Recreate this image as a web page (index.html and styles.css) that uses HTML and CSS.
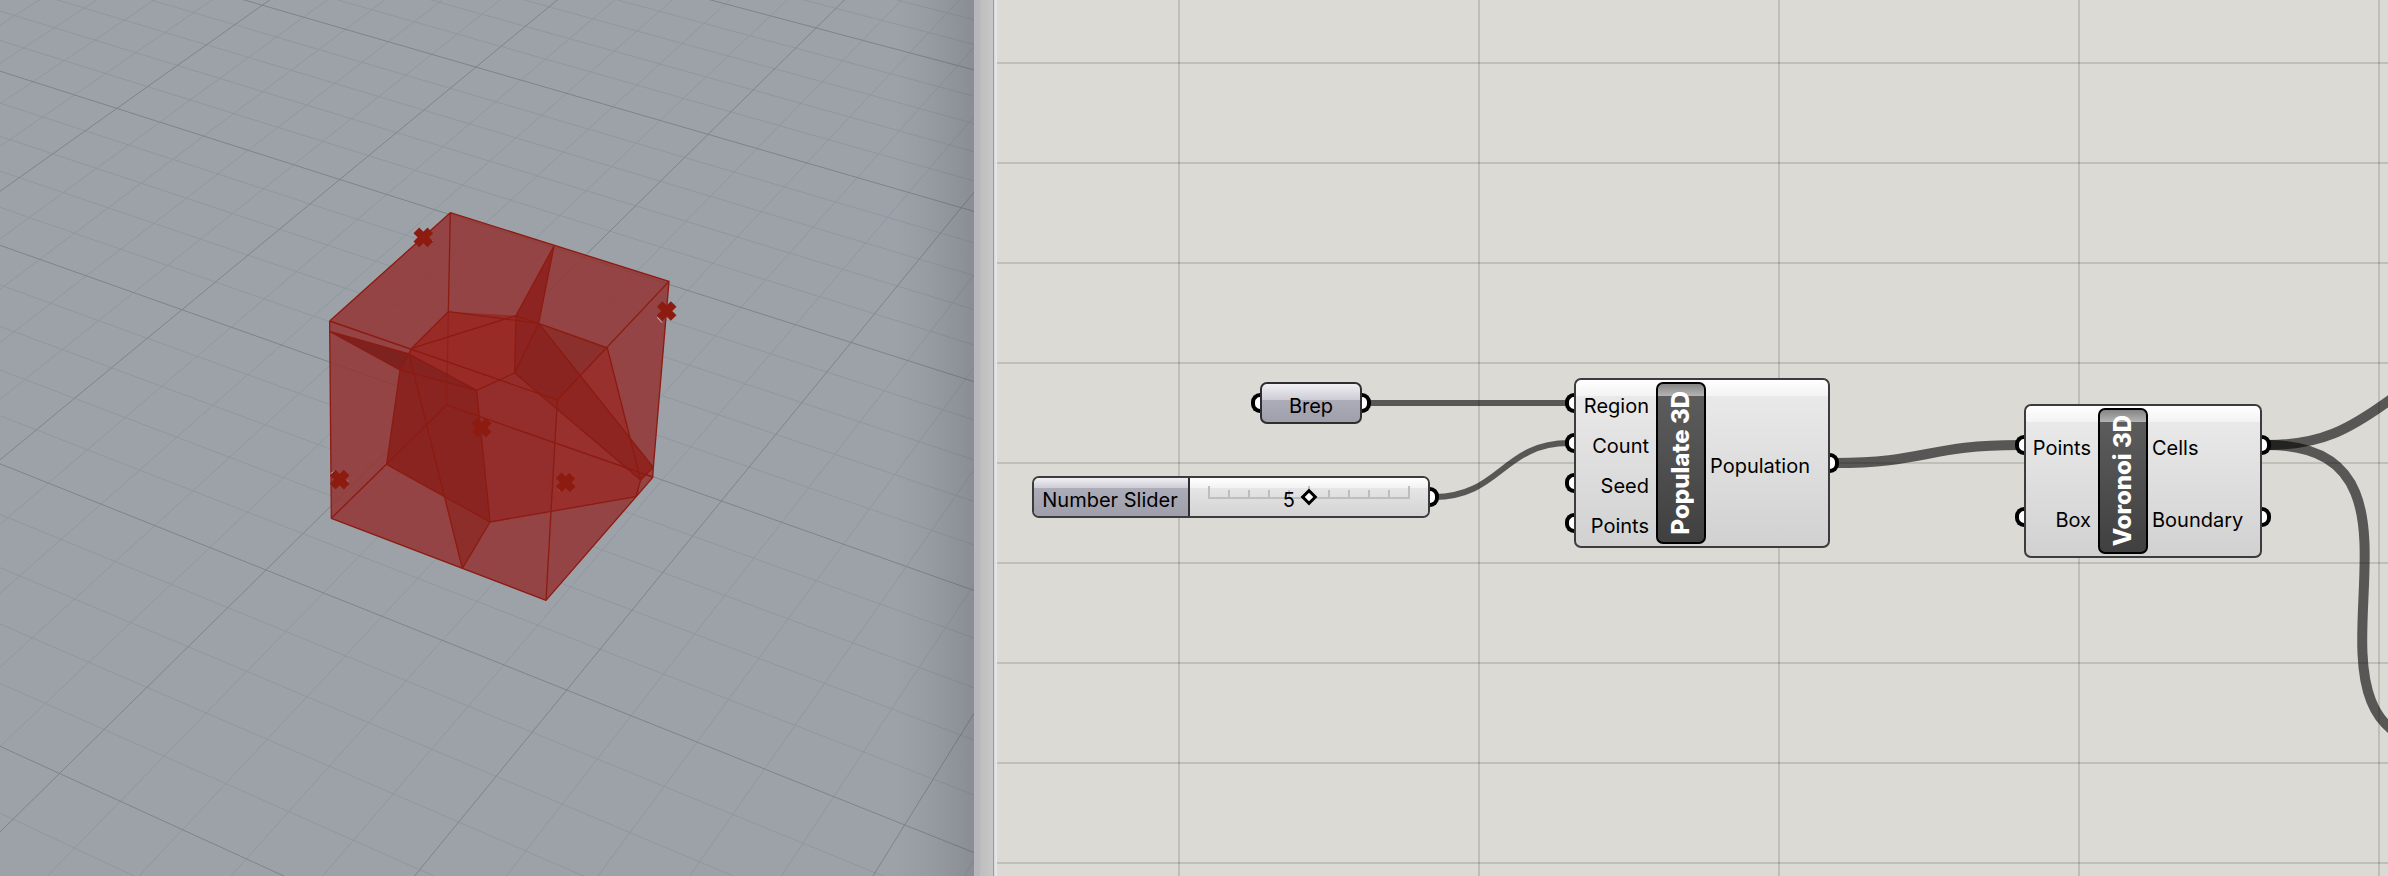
FILE: index.html
```html
<!DOCTYPE html>
<html lang="en">
<head>
<meta charset="utf-8">
<title>Voronoi 3D definition</title>
<link rel="stylesheet" href="styles.css">
</head>
<body>
<main class="workspace">
  <section class="viewport" aria-label="Perspective viewport">
    <svg class="scene" role="img" aria-label="Voronoi cells inside a box">
      <g class="ground" id="ground"></g>
      <g transform="translate(300 190) scale(0.33333)">
        <path class="box" d="M451 68L1107 274 1060 832 1058 863 738 1231 94 985 89 393z"/>
        <path fill="#942e2c" d="M445 365L716 400 922 474 1022 870 1008 920 570 996 260 823 300 540 335 475z"/>
        <path fill="#98302d" d="M772 630L840 555 922 474 1022 870 1008 920 754 964z"/>
        <path fill="#992b27" d="M445 365L648 377 644 549 530 601 327 492 335 475z"/>
        <path fill="#8b302c" d="M716 400L922 474 840 555z"/>
        <path fill="#8f2520" d="M716 400L1060 832 1022 870 644 549z"/>
        <path fill="#892420" d="M716 400L840 555 772 630 712 607 644 549z"/>
        <path fill="#8d2421" d="M762 168L716 400 644 549 648 377z"/>
        <path fill="#7e221f" d="M89 424L327 492 300 540z"/>
        <path fill="#8a2420" d="M327 492L530 601 570 996 260 823 300 540z"/>
        <path fill="#84231f" d="M327 492L530 601 300 540z"/>
        <path fill="#8e2e2b" d="M432 915L570 996 487 1135z"/>
        <path class="edge faint" d="M445 365L440 645"/>
        <path class="edge" d="M89 393L451 68 1107 274 772 630 738 1231M89 393L772 630M89 393L94 985 738 1231 1058 863 1060 832 1107 274M451 68L445 365M94 985L440 645 1058 861"/>
        <path class="edge" d="M762 168L648 377M762 168L716 400M445 365L716 400M445 365L335 475 300 540M335 475L648 377 716 400 922 474 1022 870 1008 920 570 996 487 1135 327 492M335 475L327 492M570 996L260 823 300 540 530 601M89 424L327 492 530 601M89 424L300 540M530 601L644 549 648 377M530 601L570 996M644 549L716 400 1060 832 1022 870z"/>
        <path class="glint" d="M382 168L397 152M1072 382L1086 398M92 851L106 842 119 854M130 886L143 872M770 890L783 904M810 850L824 864"/>
        <path class="cross" d="M349 121L391 163M391 121L349 163M1079 342L1121 384M1121 342L1079 384M524 692L566 734M566 692L524 734M98 848L140 890M140 848L98 890M776 856L818 898M818 856L776 898"/>
      </g>
    </svg>
  </section>

  <div class="splitter"></div>

  <section class="canvas" aria-label="Definition canvas">
    <svg class="wires" aria-hidden="true">
      <path d="M372 403H570"/>
      <path d="M437 497C503 497 506 443 572 443"/>
      <path class="thick" d="M838 463C928 463 932 445 1022 445"/>
      <path class="thick" d="M1270 445C1324 445 1352 430 1397 397"/>
      <path class="thick" d="M1270 445C1476 445 1258 748 1460 748"/>
    </svg>

    <div class="node brep">
      <span class="port in"></span>
      <span class="label">Brep</span>
      <span class="port out"></span>
    </div>

    <div class="node slider">
      <label class="slider-name" for="count"><span class="label">Number Slider</span></label>
      <div class="slider-body">
        <svg class="ticks" width="202" height="14" aria-hidden="true"><path d="M1 0V12H201V0M21 4V12M41 4V12M61 4V12M81 4V12M101 0V12M121 4V12M141 4V12M161 4V12M181 4V12"/></svg>
        <output class="slider-value label" for="count">5</output>
        <input class="slider-input" id="count" type="range" min="0" max="10" value="5">
      </div>
      <span class="port out"></span>
    </div>

    <div class="node component populate">
      <div class="side inputs">
        <div class="row"><span class="port in"></span><span class="label">Region</span></div>
        <div class="row"><span class="port in"></span><span class="label">Count</span></div>
        <div class="row"><span class="port in"></span><span class="label">Seed</span></div>
        <div class="row"><span class="port in"></span><span class="label">Points</span></div>
      </div>
      <div class="capsule"><span class="title">Populate 3D</span></div>
      <div class="side outputs">
        <div class="row"><span class="label">Population</span><span class="port out"></span></div>
      </div>
    </div>

    <div class="node component voronoi">
      <div class="side inputs">
        <div class="row"><span class="port in"></span><span class="label">Points</span></div>
        <div class="row"><span class="port in"></span><span class="label">Box</span></div>
      </div>
      <div class="capsule"><span class="title">Voronoi 3D</span></div>
      <div class="side outputs">
        <div class="row"><span class="label">Cells</span><span class="port out"></span></div>
        <div class="row"><span class="label">Boundary</span><span class="port out"></span></div>
      </div>
    </div>
  </section>
</main>
<script src="grid.js"></script>
</body>
</html>
```
FILE: styles.css
```css
* { box-sizing: border-box; }

body {
  margin: 0;
  font-family: Inter, "Liberation Sans", sans-serif;
  font-size: 20px;
  line-height: 24px;
  color: #000;
}

.workspace {
  display: grid;
  grid-template-columns: 974fr 23px 1391fr;
  min-height: 100vh;
}

/* 3D viewport */
.viewport {
  position: relative;
  overflow: hidden;
  background: #9da2a9;
}
.viewport::after {
  content: "";
  position: absolute;
  inset: 0 0 0 auto;
  width: 80px;
  background: linear-gradient(to right, rgba(60, 66, 60, 0), rgba(60, 66, 60, .06) 40%, rgba(60, 62, 64, .2));
}
.scene {
  position: absolute;
  inset: 0;
  width: 100%;
  height: 100%;
}
.ground line { stroke: #92979e; stroke-width: 1; }
.ground line.major { stroke: #7f8486; }
.box { fill: #922d2b; fill-opacity: .8; }
.edge { fill: none; stroke: #8d1b12; stroke-width: 4; stroke-linejoin: round; }
.edge.faint { stroke-opacity: .6; }
.cross { stroke: #8e1b10; stroke-width: 24; }
.glint { fill: none; stroke: #c9c4c4; stroke-width: 3; }

/* Window edge between the two panes */
.splitter {
  background: linear-gradient(to right,
    #b6b6bc 0, #b6b6bc 6px,
    #bebebe 6px, #c7c7c7 19px,
    #989a98 19px, #989a98 20px,
    #d9dadc 20px, #e9eaec 23px);
}

/* Node canvas */
.canvas {
  position: relative;
  overflow: hidden;
  background-color: #dcdad4;
  background-image:
    linear-gradient(to right, rgba(0, 0, 0, .13) 2px, transparent 2px),
    linear-gradient(to bottom, rgba(0, 0, 0, .13) 2px, transparent 2px);
  background-size: 300px 100px;
  background-position: 181px 62px;
}
.wires {
  position: absolute;
  inset: 0;
  width: 100%;
  height: 100%;
}
.wires path { fill: none; stroke: rgba(0, 0, 0, .6); stroke-width: 6; }
.wires .thick { stroke-width: 10; }

.node {
  position: absolute;
  display: flex;
  border: 2px solid #3c3c3e;
  border-radius: 7px;
}
.label { padding-top: 6px; white-space: nowrap; }

.port {
  position: absolute;
  top: calc(50% - 10px);
  width: 9px;
  height: 20px;
  border: 4px solid #000;
  background: #fff;
}
.port.in { left: -11px; border-right: 0; border-radius: 10px 0 0 10px; }
.port.out { right: -11px; border-left: 0; border-radius: 0 10px 10px 0; }

.brep {
  left: 263px;
  top: 382px;
  width: 102px;
  height: 42px;
  align-items: center;
  justify-content: center;
  background: linear-gradient(#f0eff4, #cdccd4 16px, #adacb9 16px, #9f9eab);
  border-color: #2e2e30;
}

.slider {
  left: 35px;
  top: 476px;
  width: 398px;
  height: 42px;
}
.slider-name {
  display: flex;
  align-items: center;
  justify-content: center;
  width: 156px;
  padding-right: 2px;
  border-right: 2px solid #2e2e30;
  border-radius: 5px 0 0 5px;
  background: linear-gradient(#f0eff4, #cdccd4 10px, #adacb9 10px, #9f9eab);
}
.slider-body {
  position: relative;
  display: flex;
  flex: 1;
  align-items: center;
  justify-content: center;
  border-radius: 0 5px 5px 0;
  background: linear-gradient(#fff, #f2f2f2 10px, #e6e6e6 10px, #d3d3d3);
}
.ticks { position: absolute; left: 18px; top: 8px; }
.ticks path { fill: none; stroke: #bebebe; stroke-width: 2; }
.slider-value {
  position: absolute;
  right: calc(50% + 14px);
}
.slider-input {
  position: relative;
  appearance: none;
  width: 210px;
  height: 14px;
  margin: 0;
  background: transparent;
}
.slider-input::-webkit-slider-thumb {
  appearance: none;
  width: 12px;
  height: 12px;
  border: 3px solid #000;
  background: #fff;
  transform: rotate(45deg);
}

.component { background: linear-gradient(#fff, #f3f3f3 16px, #e9e9e9 16px, #d1d1d1); }
.populate { left: 577px; top: 378px; width: 256px; height: 170px; }
.voronoi { left: 1027px; top: 404px; width: 238px; height: 154px; }
.side { display: flex; flex-direction: column; padding: 3px 0; }
.populate .inputs { width: 80px; }
.voronoi .inputs { width: 72px; }
.outputs { flex: 1; }
.row {
  position: relative;
  display: flex;
  flex: 1;
  align-items: center;
}
.inputs .row { justify-content: flex-end; padding-right: 7px; }
.outputs .row { padding-left: 4px; }

.capsule {
  display: flex;
  align-items: center;
  justify-content: center;
  width: 50px;
  margin: 2px 0;
  border: 2px solid #000;
  border-radius: 7px;
  background: linear-gradient(#858585, #b4b4b4 12px, #5c5c5c 12px, #404040);
}
.title {
  writing-mode: vertical-rl;
  transform: rotate(180deg);
  font-size: 24px;
  font-weight: 800;
  line-height: 28px;
  white-space: nowrap;
  color: #fff;
}
```
FILE: grid.js
```js
// Ground plane: three major squares per unit, five minor cells per square.
const ground = document.getElementById("ground");

function project(u, v) {
  const w = 1 - 0.11962 * u - 0.19769 * v;
  return [
    (584.01 * u - 459.43 * v + 262.3) / w,
    (177.66 * u + 288.2 * v + 5.2) / w
  ];
}

function addLine(from, to, major) {
  const line = document.createElementNS("http://www.w3.org/2000/svg", "line");
  line.setAttribute("x1", from[0]);
  line.setAttribute("y1", from[1]);
  line.setAttribute("x2", to[0]);
  line.setAttribute("y2", to[1]);
  if (major) line.setAttribute("class", "major");
  ground.appendChild(line);
}

for (const major of [false, true]) {
  for (let n = -30; n <= 39; n++) {
    if ((n % 5 === 0) !== major) continue;
    const k = n / 15;
    addLine(project(k, -2), project(k, 2.6), major);
    addLine(project(-2, k), project(2.6, k), major);
  }
}
```
